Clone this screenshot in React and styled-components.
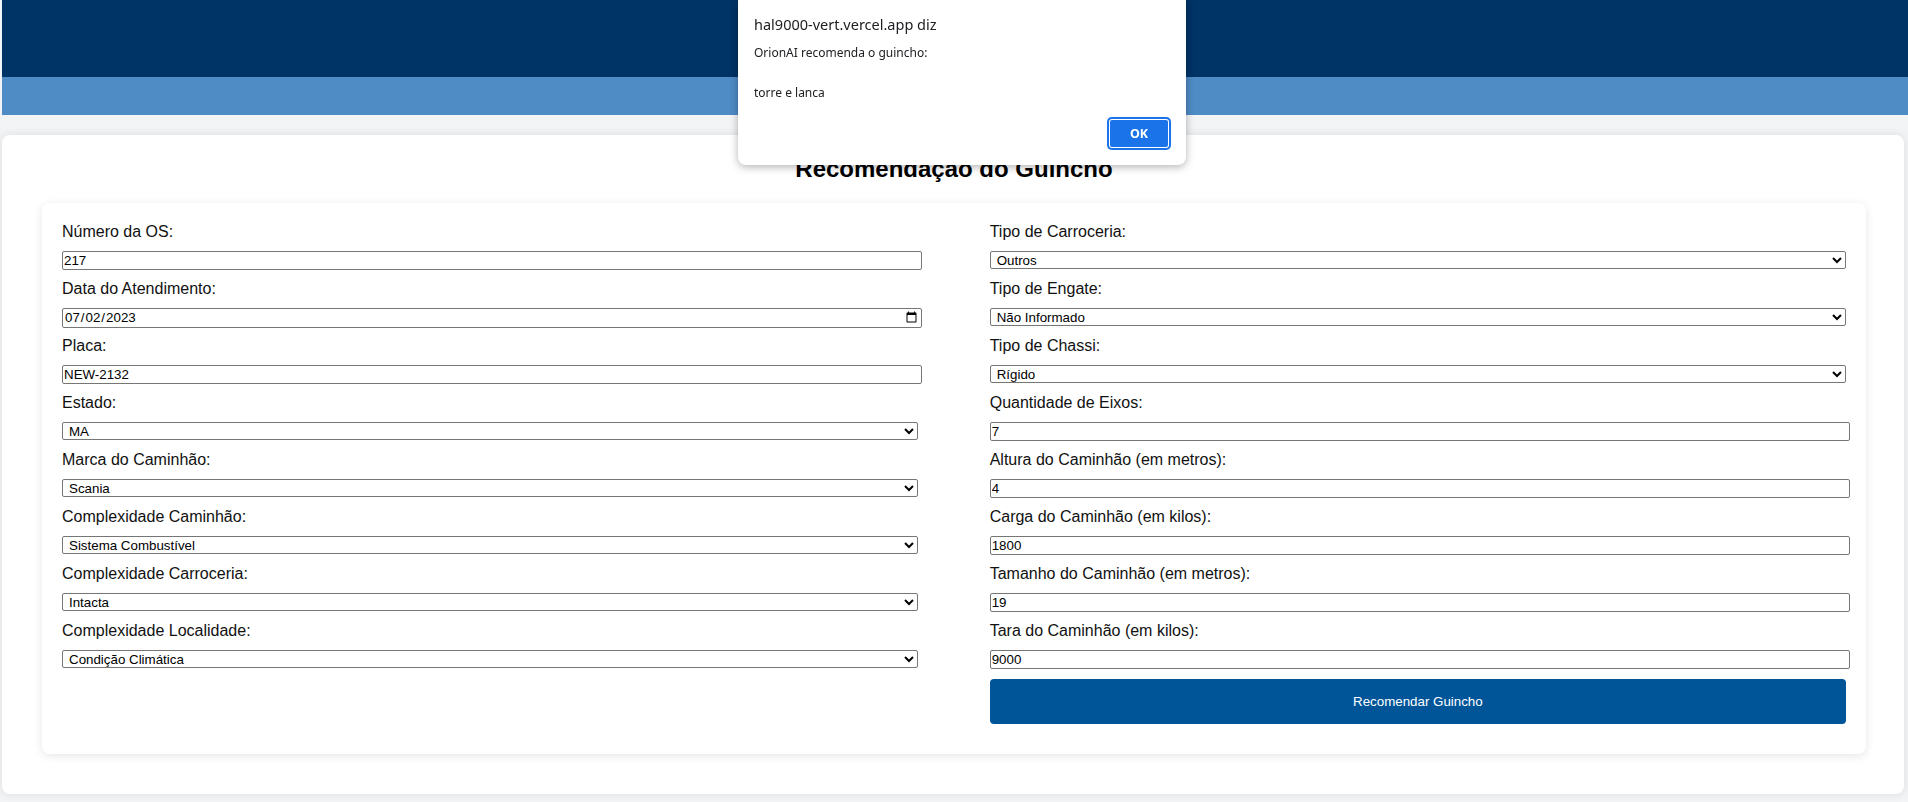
import React from "react";
import styled, { createGlobalStyle } from "styled-components";

const Global = createGlobalStyle`
  html, body { margin: 0; padding: 0; }
  body {
    background: #f3f4f6;
    font-family: "Liberation Sans", Arial, sans-serif;
    overflow: hidden;
  }
`;

const Page = styled.div`
  padding-left: 2px;
  min-height: 802px;
  box-sizing: border-box;
`;

const TopBar = styled.div`
  height: 77px;
  background: #003366;
`;

const SubBar = styled.div`
  height: 38px;
  background: #4f8bc5;
`;

const Main = styled.main`
  padding: 20px 4px 9px 0;
`;

const Card = styled.section`
  background: #ffffff;
  border-radius: 8px;
  box-shadow: 0 0 10px rgba(0, 0, 0, 0.1);
  padding: 20px 38px 40px 40px;
`;

const Title = styled.h2`
  margin: 0 0 20px;
  text-align: center;
  font-size: 24px;
  font-weight: bold;
  color: #000;
`;

const FormCard = styled.form`
  background: #ffffff;
  border-radius: 8px;
  box-shadow: 0 2px 10px rgba(0, 0, 0, 0.1);
  padding: 20px 20px 30px;
  display: flex;
  justify-content: space-between;
`;

const Column = styled.div`
  width: 48%;
`;

const Label = styled.label`
  display: block;
  font-size: 16px;
  line-height: 18px;
  margin-bottom: 10px;
  color: #111;
`;

const TextInput = styled.input`
  display: block;
  box-sizing: content-box;
  width: 100%;
  height: ${(p) => (p.type === "date" ? "18px" : "17px")};
  padding: 0 1px;
  margin: 0 0 ${(p) => (p.type === "date" ? "9px" : "10px")};
  border: 1px solid #767676;
  border-radius: 2px;
  background: #fff;
  font-family: "Liberation Sans", Arial, sans-serif;
  font-size: 13.33px;
  color: #000;
`;

const Select = styled.select`
  display: block;
  box-sizing: border-box;
  width: 100%;
  height: 18px;
  margin: 0 0 11px;
  padding: 0 2px;
  border: 1px solid #767676;
  border-radius: 2px;
  background: #fff;
  font-family: "Liberation Sans", Arial, sans-serif;
  font-size: 13.33px;
  color: #000;
`;

const SubmitButton = styled.button`
  display: block;
  width: 100%;
  height: 45px;
  border: none;
  border-radius: 4px;
  background: #005599;
  color: #fff;
  font-family: "Liberation Sans", Arial, sans-serif;
  font-size: 13.33px;
  cursor: pointer;
`;

const Dialog = styled.div`
  position: fixed;
  top: 0;
  left: 738px;
  width: 448px;
  box-sizing: border-box;
  background: #fff;
  border-radius: 0 0 8px 8px;
  box-shadow: 0 2px 8px rgba(0, 0, 0, 0.3);
  padding: 14px 15px 15px 16px;
  font-family: "Noto Sans", "Open Sans", sans-serif;
  color: #202124;
`;

const DialogTitle = styled.div`
  font-size: 14.5px;
  line-height: 20px;
  margin-bottom: 9px;
`;

const DialogMessage = styled.div`
  font-size: 12px;
  line-height: 20px;
  white-space: pre-line;
  margin-bottom: 14px;
`;

const DialogActions = styled.div`
  display: flex;
  justify-content: flex-end;
`;

const OkButton = styled.button`
  width: 64px;
  height: 33px;
  border: none;
  border-radius: 5px;
  background: #1a73e8;
  box-shadow: inset 0 0 0 2px #1a73e8, inset 0 0 0 3px #fff;
  color: #fff;
  font-family: "Noto Sans", "Open Sans", sans-serif;
  font-size: 12.5px;
  font-weight: bold;
`;

function Field({ label, children }) {
  return (
    <div>
      <Label>{label}</Label>
      {children}
    </div>
  );
}

function Choice({ value }) {
  return (
    <Select defaultValue={value}>
      <option value={value}>{value}</option>
    </Select>
  );
}

export default function App() {
  return (
    <>
      <Global />
      <Page>
        <TopBar />
        <SubBar />
        <Main>
          <Card>
            <Title>Recomendação do Guincho</Title>
            <FormCard onSubmit={(e) => e.preventDefault()}>
              <Column>
                <Field label="Número da OS:">
                  <TextInput type="text" defaultValue="217" />
                </Field>
                <Field label="Data do Atendimento:">
                  <TextInput type="date" defaultValue="2023-07-02" />
                </Field>
                <Field label="Placa:">
                  <TextInput type="text" defaultValue="NEW-2132" />
                </Field>
                <Field label="Estado:">
                  <Choice value="MA" />
                </Field>
                <Field label="Marca do Caminhão:">
                  <Choice value="Scania" />
                </Field>
                <Field label="Complexidade Caminhão:">
                  <Choice value="Sistema Combustível" />
                </Field>
                <Field label="Complexidade Carroceria:">
                  <Choice value="Intacta" />
                </Field>
                <Field label="Complexidade Localidade:">
                  <Choice value="Condição Climática" />
                </Field>
              </Column>
              <Column>
                <Field label="Tipo de Carroceria:">
                  <Choice value="Outros" />
                </Field>
                <Field label="Tipo de Engate:">
                  <Choice value="Não Informado" />
                </Field>
                <Field label="Tipo de Chassi:">
                  <Choice value="Rígido" />
                </Field>
                <Field label="Quantidade de Eixos:">
                  <TextInput type="text" defaultValue="7" />
                </Field>
                <Field label="Altura do Caminhão (em metros):">
                  <TextInput type="text" defaultValue="4" />
                </Field>
                <Field label="Carga do Caminhão (em kilos):">
                  <TextInput type="text" defaultValue="1800" />
                </Field>
                <Field label="Tamanho do Caminhão (em metros):">
                  <TextInput type="text" defaultValue="19" />
                </Field>
                <Field label="Tara do Caminhão (em kilos):">
                  <TextInput type="text" defaultValue="9000" />
                </Field>
                <SubmitButton type="submit">Recomendar Guincho</SubmitButton>
              </Column>
            </FormCard>
          </Card>
        </Main>
        <Dialog role="alertdialog">
          <DialogTitle>hal9000-vert.vercel.app diz</DialogTitle>
          <DialogMessage>{"OrionAI recomenda o guincho:\n\ntorre e lanca"}</DialogMessage>
          <DialogActions>
            <OkButton type="button">OK</OkButton>
          </DialogActions>
        </Dialog>
      </Page>
    </>
  );
}
